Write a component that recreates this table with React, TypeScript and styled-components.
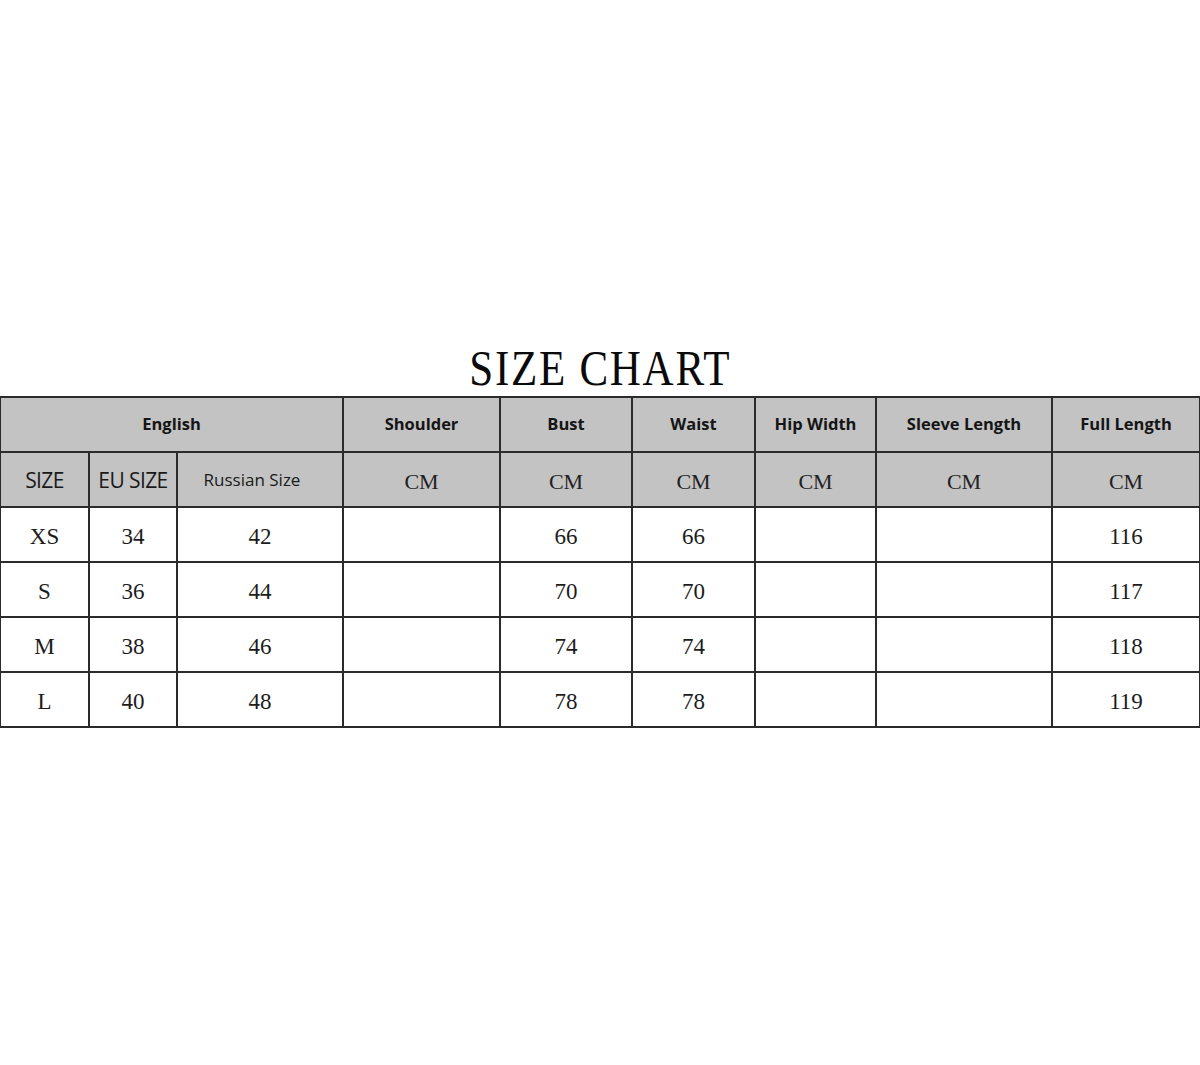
import * as React from "react";
import styled, { createGlobalStyle } from "styled-components";

const GlobalStyle = createGlobalStyle`
  html, body {
    margin: 0;
    padding: 0;
    background: #ffffff;
  }
  body {
    font-family: "Liberation Serif", serif;
    color: #111;
  }
`;

const columns = [89, 88, 166, 157, 132, 123, 121, 176, 148];

const measures = ["Shoulder", "Bust", "Waist", "Hip Width", "Sleeve Length", "Full Length"];

const rows = [
  ["XS", "34", "42", "", "66", "66", "", "", "116"],
  ["S", "36", "44", "", "70", "70", "", "", "117"],
  ["M", "38", "46", "", "74", "74", "", "", "118"],
  ["L", "40", "48", "", "78", "78", "", "", "119"],
];

export default function App() {
  return (
    <>
      <GlobalStyle />
      <Page>
        <TitleBar>
          <Title>SIZE CHART</Title>
        </TitleBar>
        <Chart>
          <colgroup>
            {columns.map((w, i) => (
              <col key={i} style={{ width: w }} />
            ))}
          </colgroup>
          <thead>
            <HeadRow>
              <HeadCell colSpan={3}>English</HeadCell>
              {measures.map((m) => (
                <HeadCell key={m}>{m}</HeadCell>
              ))}
            </HeadRow>
            <HeadRow>
              <LabelCell>SIZE</LabelCell>
              <LabelCell>EU SIZE</LabelCell>
              <LabelCell $small>Russian Size</LabelCell>
              {measures.map((m) => (
                <UnitCell key={m}>CM</UnitCell>
              ))}
            </HeadRow>
          </thead>
          <tbody>
            {rows.map((r) => (
              <BodyRow key={r[0]}>
                {r.map((v, i) => (
                  <DataCell key={i}>{v}</DataCell>
                ))}
              </BodyRow>
            ))}
          </tbody>
        </Chart>
      </Page>
    </>
  );
}

const Page = styled.div`
  width: 1200px;
  height: 1065px;
  padding-top: 340px;
  box-sizing: border-box;
  overflow: hidden;
`;

const TitleBar = styled.div`
  height: 56px;
  display: flex;
  justify-content: center;
  align-items: center;
`;

const Title = styled.h1`
  margin: 0;
  line-height: 56px;
  font-family: "Liberation Serif", serif;
  font-weight: 400;
  font-size: 50px;
  letter-spacing: 2px;
  transform: scaleX(0.86);
  white-space: nowrap;
  color: #0a0a0a;
`;

const Chart = styled.table`
  width: 1202px;
  table-layout: fixed;
  border-collapse: collapse;
  margin-left: -1px;
`;

const HeadRow = styled.tr`
  height: 55px;
  background: #c3c3c3;
`;

const BodyRow = styled.tr`
  height: 55px;
  background: #ffffff;
`;

const cellBorder = `
  border: 2px solid #2b2b2b;
  padding: 0;
  text-align: center;
  vertical-align: middle;
`;

const HeadCell = styled.th`
  ${cellBorder}
  padding-bottom: 3px;
  font-family: "Open Sans", "Liberation Sans", sans-serif;
  font-weight: 700;
  font-size: 16.5px;
  color: #151515;
`;

const LabelCell = styled.th<{ $small?: boolean }>`
  ${cellBorder}
  padding-right: ${(p) => (p.$small ? "16px" : "0")};
  font-family: "Open Sans", "Liberation Sans", sans-serif;
  font-weight: 400;
  font-size: ${(p) => (p.$small ? "17px" : "21px")};
  letter-spacing: ${(p) => (p.$small ? "0" : "-0.6px")};
  color: #1a1a1a;
`;

const UnitCell = styled.th`
  ${cellBorder}
  padding-top: 4px;
  font-family: "Liberation Serif", serif;
  font-weight: 400;
  font-size: 22px;
  color: #222;
`;

const DataCell = styled.td`
  ${cellBorder}
  padding-top: 5px;
  font-family: "Liberation Serif", serif;
  font-size: 23px;
  color: #1c1c1c;
`;
